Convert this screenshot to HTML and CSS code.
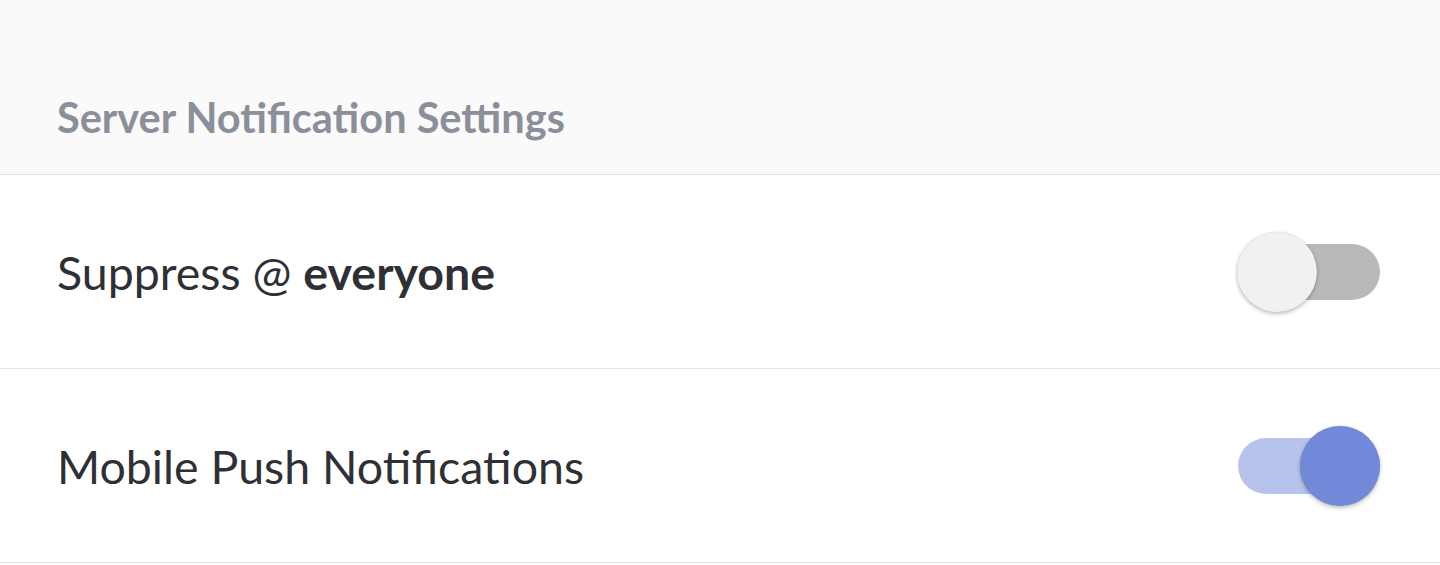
FILE: index.html
```html
<!DOCTYPE html>
<html>
<head>
<meta charset="utf-8">
<link rel="stylesheet" href="styles.css">
</head>
<body>
<div class="page">
  <div class="section-header">
    <h2 class="section-title">Server Notification Settings</h2>
  </div>
  <div class="setting-row">
    <div class="setting-label">Suppress @ <strong>everyone</strong></div>
    <div class="toggle toggle-off"><span class="knob"></span></div>
  </div>
  <div class="setting-row">
    <div class="setting-label">Mobile Push Notifications</div>
    <div class="toggle toggle-on"><span class="knob"></span></div>
  </div>
</div>
</body>
</html>
```
FILE: styles.css
```css
* { box-sizing: border-box; }
html, body { margin: 0; padding: 0; background: #ffffff; }
body { font-family: Lato, "Open Sans", sans-serif; }
.page { width: 1440px; }
.section-header {
  height: 175px;
  background: #fafafa;
  border-bottom: 1px solid #e3e3e3;
  padding: 92px 57px 0;
}
.section-title {
  margin: 0;
  font-size: 41.5px;
  font-weight: 700;
  color: #8a8f99;
  line-height: 50px;
}
.setting-row {
  height: 194px;
  border-bottom: 1px solid #e3e3e3;
  display: flex;
  align-items: center;
  justify-content: space-between;
  padding: 0 60px 0 57px;
}
.setting-label {
  font-size: 46.5px;
  color: #2e3036;
}
.setting-label strong { font-weight: 700; }
.toggle {
  position: relative;
  width: 142px;
  height: 56px;
  border-radius: 28px;
}
.toggle-off { background: #b9b9b9; }
.toggle-on { background: #b8c3eb; }
.knob {
  position: absolute;
  top: -12px;
  width: 80px;
  height: 80px;
  border-radius: 50%;
  box-shadow: 0 2px 4px rgba(0,0,0,0.25), 0 0 1px rgba(0,0,0,0.2);
}
.toggle-off .knob { left: -1px; background: #f1f1f1; }
.toggle-on .knob { right: 0; background: #7289da; }
```
